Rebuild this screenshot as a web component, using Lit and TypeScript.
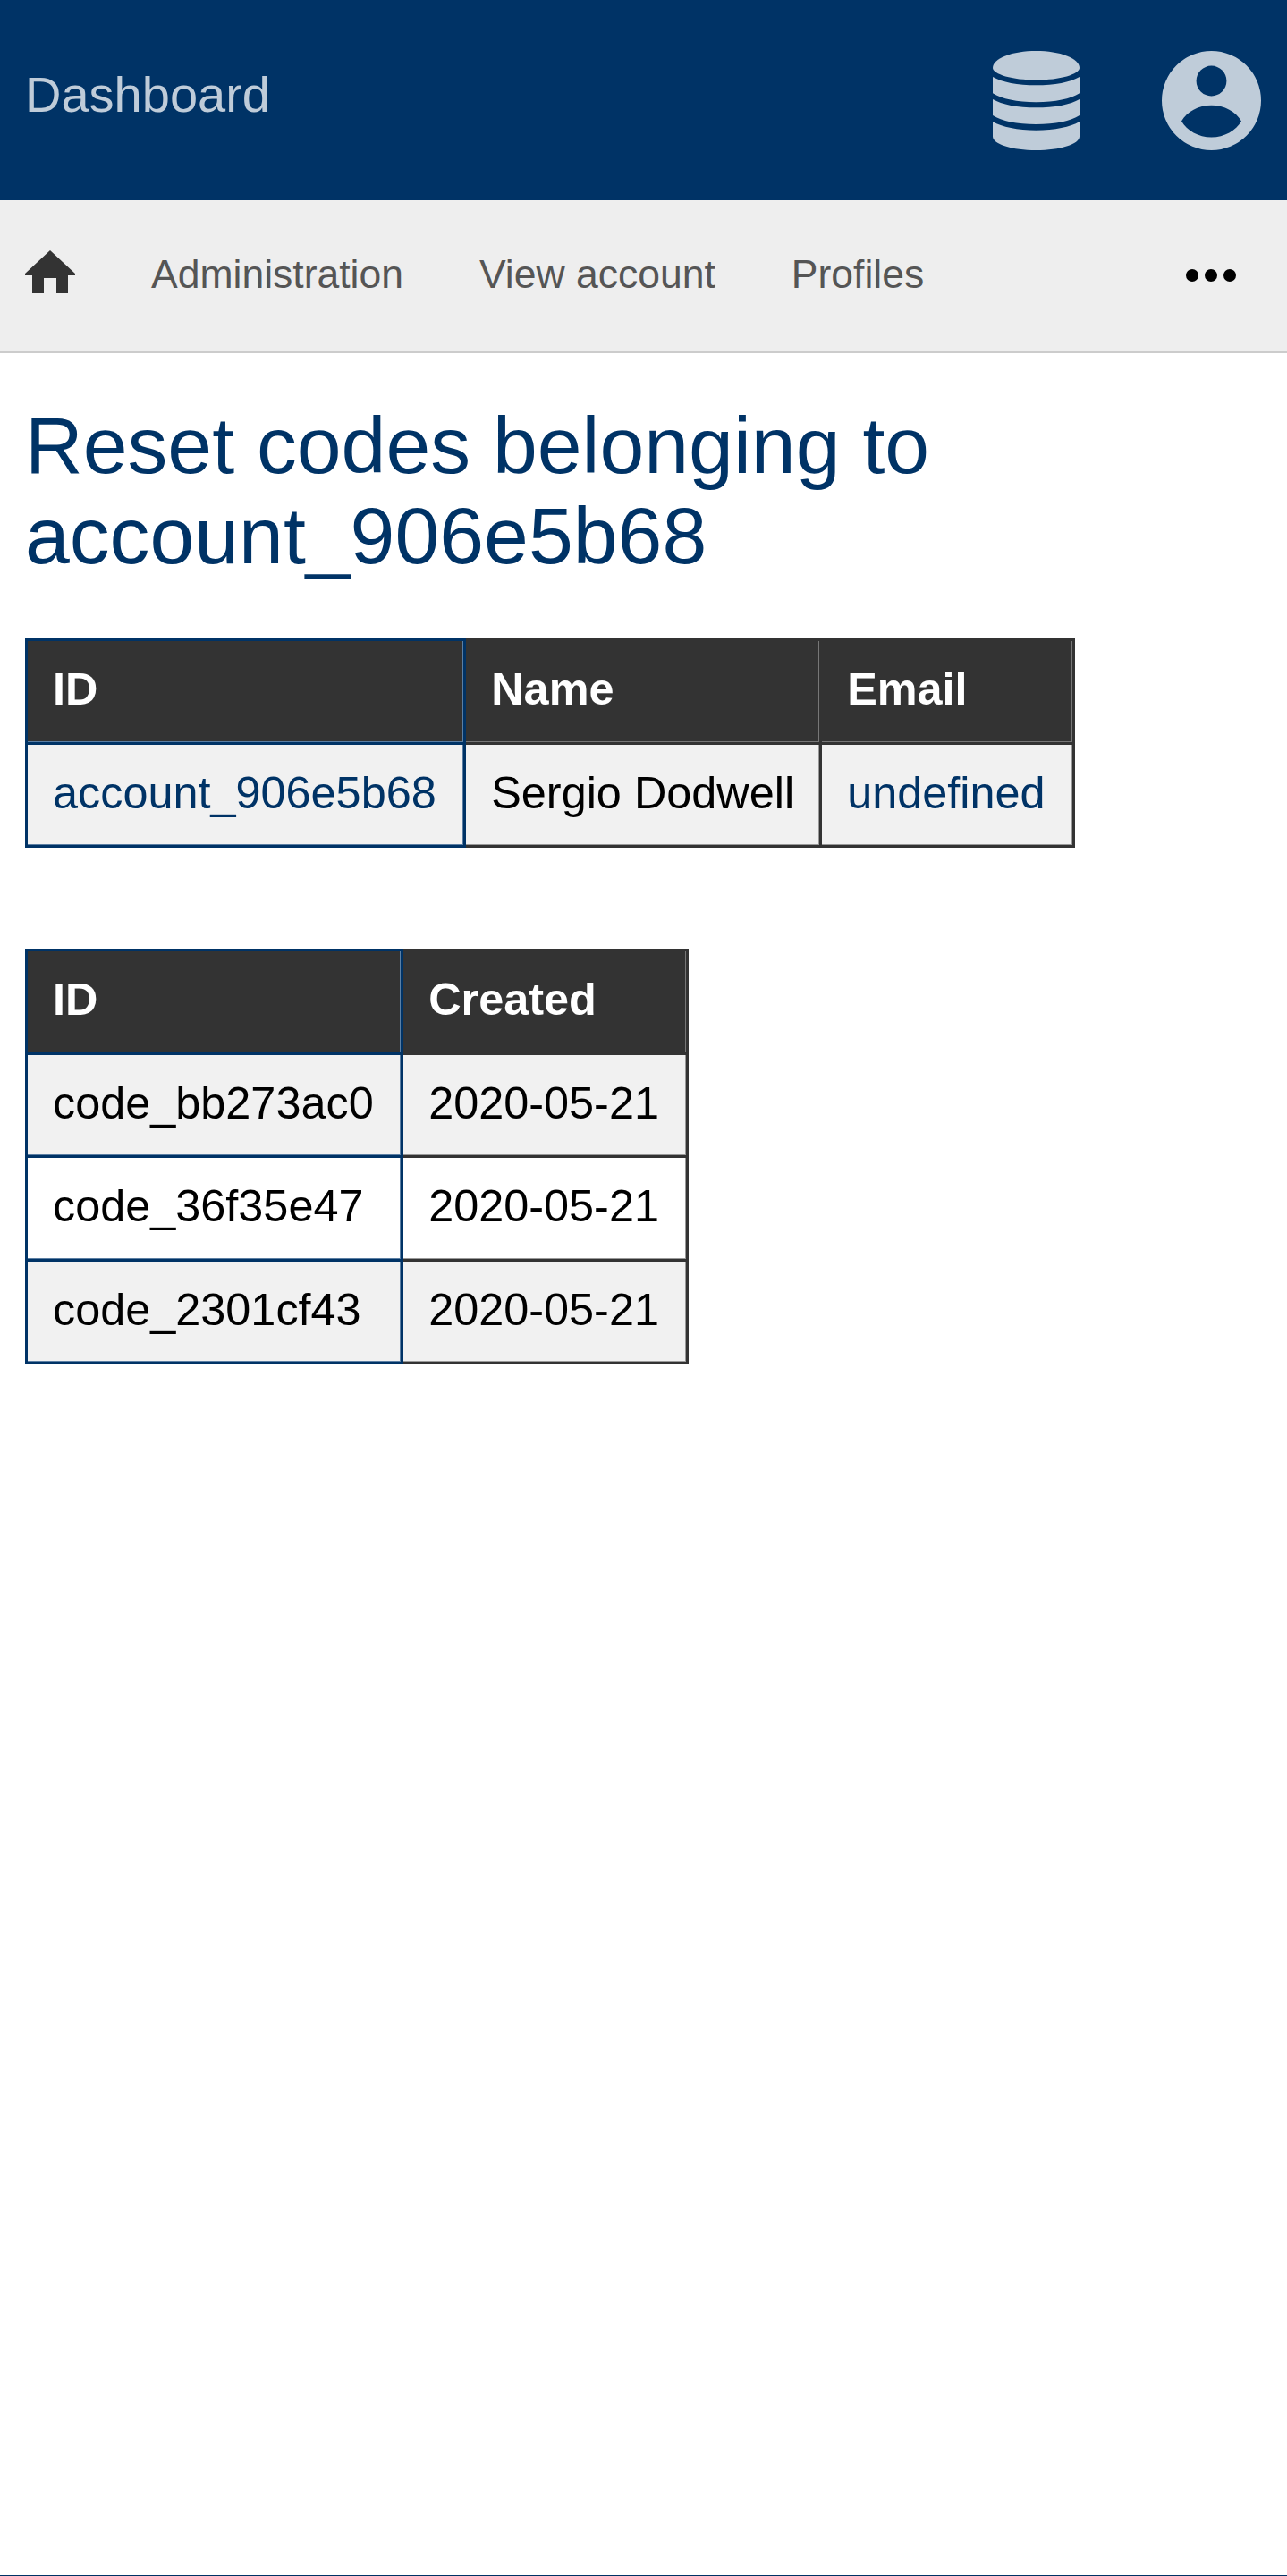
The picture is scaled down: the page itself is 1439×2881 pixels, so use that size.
import { LitElement, html, css } from 'lit';
import { customElement } from 'lit/decorators.js';

@customElement('app-root')
export class AppRoot extends LitElement {
  static styles = css`
    :host {
      display: flex;
      flex-direction: column;
      min-height: 2881px;
      background: #fff;
      font-family: "Liberation Sans", Arial, sans-serif;
      font-size: 56px;
      color: #000;
    }

    .masthead {
      display: flex;
      align-items: center;
      height: 224px;
      padding: 0 29px 0 28px;
      background: #003366;
      color: #bfccd9;
    }
    .masthead .title {
      flex: 1;
      margin-bottom: 13px;
    }
    .masthead svg {
      display: block;
      fill: #bfccd9;
    }
    .masthead .db {
      margin-right: 92px;
    }

    .nav {
      display: flex;
      align-items: center;
      gap: 85px;
      height: 168px;
      padding: 0 29px 0 28px;
      background: #eee;
      border-bottom: 3px solid #ccc;
      font-size: 44.5px;
      color: #555;
    }
    .nav svg {
      display: block;
    }
    .nav span {
      margin-bottom: 3px;
    }
    .nav .home {
      margin-bottom: 9px;
    }
    .nav .more {
      margin-left: auto;
      margin-right: 28px;
    }

    .content {
      padding: 0 28px;
    }
    h1 {
      margin: 53px 0 64px;
      font-size: 89.6px;
      font-weight: 400;
      line-height: 101px;
      color: #003366;
    }

    table {
      border-collapse: separate;
      border-spacing: 0;
      margin-bottom: 113px;
      font-size: 50.4px;
    }
    th, td {
      border-right: 3px solid #333;
      border-bottom: 3px solid #333;
      padding: 25px 28px 29.5px;
      line-height: 58px;
      text-align: left;
      white-space: nowrap;
      box-shadow: inset -1px -1px 0 #999;
    }
    th {
      border-top: 3px solid #333;
      background: #333;
      color: #fff;
      font-weight: 700;
      box-shadow: inset -1px -1px 0 #777;
    }
    th:last-child, td:last-child {
      padding-right: 30px;
    }
    th:first-child, td:first-child {
      padding-right: 30.5px;
      border-left: 3px solid #003366;
      border-right-color: #003366;
      border-bottom-color: #003366;
      box-shadow: inset -1px -1px 0 #5c7fa3;
    }
    th:first-child {
      border-top-color: #003366;
    }
    tbody tr:nth-child(odd) td {
      background: #f1f1f1;
    }
    a {
      color: #003366;
      text-decoration: none;
    }

    .foot {
      margin-top: auto;
      height: 1px;
      background: #003366;
    }
  `;

  private account = { id: 'account_906e5b68', name: 'Sergio Dodwell', email: 'undefined' };
  private codes = [
    { id: 'code_bb273ac0', created: '2020-05-21' },
    { id: 'code_36f35e47', created: '2020-05-21' },
    { id: 'code_2301cf43', created: '2020-05-21' },
  ];

  render() {
    return html`
      <header class="masthead">
        <div class="title">Dashboard</div>
        <svg class="db" width="97" height="111" viewBox="0 0 97 111">
          <path d="M0 19C0 8 22 0 48.500 0S97 8 97 19C97 26 75 32.500 48.500 32.500S0 26 0 19Z"/>
          <path d="M0 29C10 35 28 38.300 48.500 38.300S87 35 97 29V47.300C87 53.500 70 57.300 48.500 57.300S10 53.500 0 47.300Z"/>
          <path d="M0 54C10 60 28 63.300 48.500 63.300S87 60 97 54V72C87 78.500 70 82 48.500 82S10 78.500 0 72Z"/>
          <path d="M0 79C10 85 28 88.700 48.500 88.700S87 85 97 79V95.700C97 104 75 111 48.500 111S0 104 0 95.700Z"/>
        </svg>
        <svg width="111" height="111" viewBox="0 0 111 111">
          <path fill-rule="evenodd" d="M55.500 0A55.500 55.500 0 1 1 55.500 111A55.500 55.500 0 1 1 55.500 0ZM55.500 16.600A16.900 16.900 0 1 0 55.500 50.400A16.900 16.900 0 1 0 55.500 16.600ZM22 78.500C28 89 41 96.500 55.500 96.500S83 89 89 78.500C83 68 70 60.700 55.500 60.700S28 68 22 78.500Z"/>
        </svg>
      </header>
      <nav class="nav">
        <svg class="home" width="56" height="48" viewBox="0 0 56 48" fill="#333">
          <path d="M28 0L56 26V28H48V48H35V31H21V48H8V28H0V26Z"/>
        </svg>
        <span>Administration</span>
        <span>View account</span>
        <span>Profiles</span>
        <svg class="more" width="56" height="14" viewBox="0 0 56 14" fill="#000">
          <circle cx="7" cy="7" r="7"/>
          <circle cx="28" cy="7" r="7"/>
          <circle cx="49" cy="7" r="7"/>
        </svg>
      </nav>
      <main class="content">
        <h1>Reset codes belonging to ${this.account.id}</h1>
        <table>
          <thead>
            <tr><th>ID</th><th>Name</th><th>Email</th></tr>
          </thead>
          <tbody>
            <tr>
              <td><a href="#">${this.account.id}</a></td>
              <td>${this.account.name}</td>
              <td><a href="#">${this.account.email}</a></td>
            </tr>
          </tbody>
        </table>
        <table>
          <thead>
            <tr><th>ID</th><th>Created</th></tr>
          </thead>
          <tbody>
            ${this.codes.map((c) => html`<tr><td>${c.id}</td><td>${c.created}</td></tr>`)}
          </tbody>
        </table>
      </main>
      <div class="foot"></div>
    `;
  }
}
